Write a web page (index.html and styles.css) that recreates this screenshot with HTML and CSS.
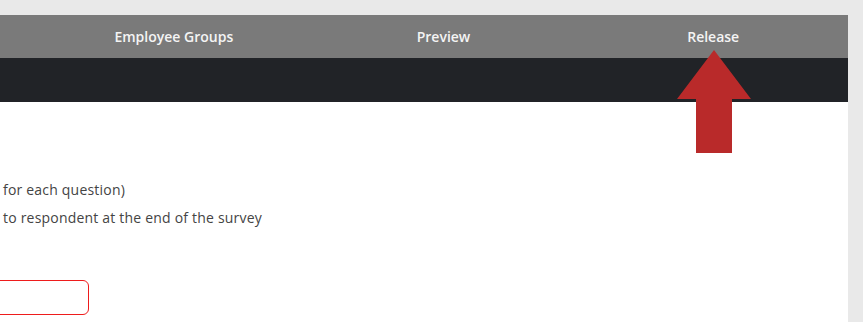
FILE: index.html
```html
<!DOCTYPE html>
<html lang="en">
<head>
    <meta charset="UTF-8">
    <title>Survey Settings</title>
    <link rel="stylesheet" href="styles.css">
</head>
<body>
    <div class="page">
        <nav class="steps-nav">
            <a class="step">Employee Groups</a>
            <a class="step">Preview</a>
            <a class="step">Release</a>
            <svg class="arrow" width="76" height="106" viewBox="0 0 76 106">
                <polygon points="38,0 75,49 56,49 56,103 20,103 20,49 1,49" fill="#b92a2a"/>
            </svg>
        </nav>
        <div class="toolbar"></div>
        <div class="content">
            <div class="options">
                <p class="option">for each question)</p>
                <p class="option">to respondent at the end of the survey</p>
            </div>
            <div class="field-error"></div>
        </div>
    </div>
</body>
</html>
```

FILE: styles.css
```css
html, body {
    margin: 0;
    padding: 0;
    background: #e9e9e9;
    font-family: 'Open Sans', sans-serif;
    overflow: hidden;
}
.page {
    width: 848px;
    margin-top: 15px;
    background: #fff;
    height: 307px;
}
.steps-nav {
    position: relative;
    display: flex;
    height: 43px;
    padding-left: 39px;
    background: #7a7a7a;
}
.step {
    width: 270px;
    text-align: center;
    line-height: 43px;
    color: #f4f4f4;
    font-size: 14px;
    font-weight: 600;
}
.arrow {
    position: absolute;
    left: 676px;
    top: 35px;
}
.toolbar {
    height: 44px;
    background: #212327;
}
.content {
    padding: 78px 0 0 3px;
}
.option {
    margin: 0 0 9px 0;
    font-size: 14px;
    line-height: 19px;
    letter-spacing: 0.2px;
    color: #444;
}
.field-error {
    width: 96px;
    height: 33px;
    margin: 53px 0 0 -12px;
    border: 1px solid #ee1c1c;
    border-radius: 6px;
}
```
